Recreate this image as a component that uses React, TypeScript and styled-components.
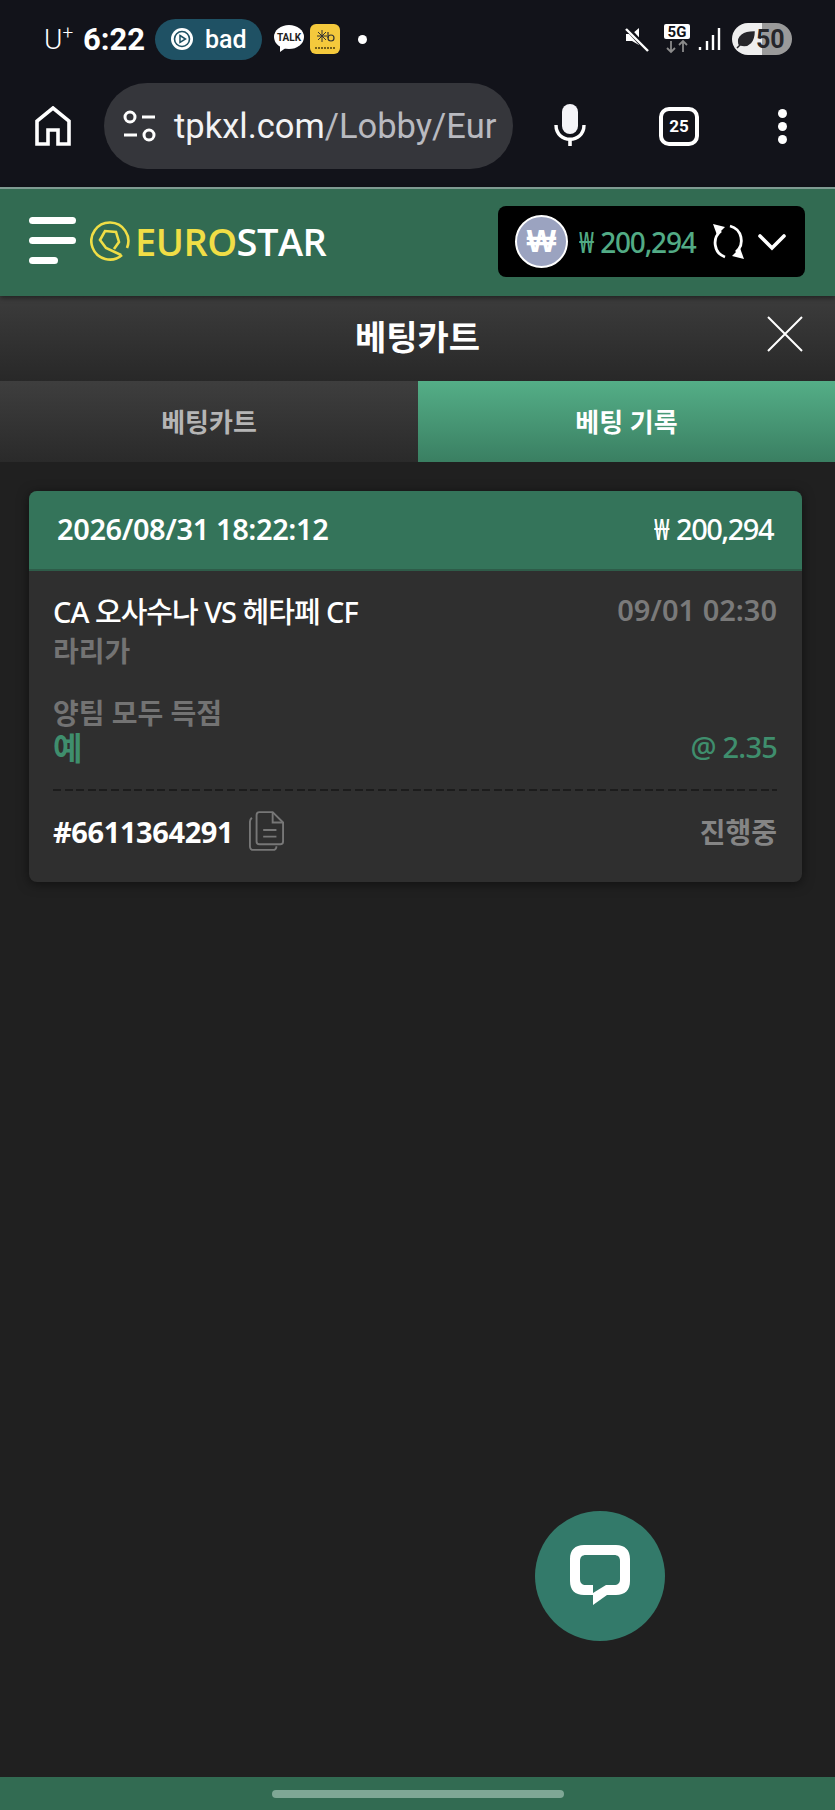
import React from 'react'
import styled, { createGlobalStyle } from 'styled-components'

const GlobalStyle = createGlobalStyle`
	html, body {
		margin: 0;
		padding: 0;
		background: #202020;
	}
	* {
		box-sizing: border-box;
	}
`

const KR = `"Noto Sans", "Noto Sans CJK KR", sans-serif`

const Page = styled.div`
	position: relative;
	width: 835px;
	height: 1810px;
	display: flex;
	flex-direction: column;
	background: #202020;
	font-family: ${KR};
	overflow: hidden;
`

/* phone chrome */
const Chrome = styled.div`
	height: 187px;
	background: #12131a;
	flex: none;
`

const StatusBar = styled.div`
	height: 78px;
	padding: 0 43px 0 44px;
	display: flex;
	align-items: center;
	justify-content: space-between;
	color: #fff;
	font-family: Roboto, sans-serif;
`

const StatusGroup = styled.div`
	display: flex;
	align-items: center;
`

const Carrier = styled.span`
	font-size: 28px;
	font-weight: 300;
	width: 39px;
	sup {
		font-size: 19px;
		line-height: 0;
		vertical-align: 10px;
	}
`

const Clock = styled.span`
	font-size: 31px;
	font-weight: 700;
	width: 72px;
`

const MediaPill = styled.div`
	width: 107px;
	height: 41px;
	border-radius: 21px;
	background: #1f5164;
	display: flex;
	align-items: center;
	padding-left: 15px;
	gap: 11px;
	font-size: 25px;
	font-weight: 500;
	margin-right: 12px;
`

const KbBadge = styled.div`
	width: 30px;
	height: 30px;
	border-radius: 6px;
	background: #f4c93c;
	margin-left: 6px;
	margin-right: 18px;
`

const Dot = styled.div`
	width: 9px;
	height: 9px;
	border-radius: 50%;
	background: #fff;
`

const Battery = styled.div`
	width: 60px;
	height: 32px;
	border-radius: 16px;
	background: linear-gradient(90deg, #eeeeee 0 50%, #9a9a9a 50% 100%);
	margin-left: 10px;
	display: flex;
	align-items: center;
	padding-left: 3px;
	color: #26262a;
	font-size: 25px;
	font-weight: 700;
	line-height: 1;
`

const Toolbar = styled.div`
	height: 109px;
	padding: 5px 0 18px 35px;
	display: flex;
	align-items: center;
`

const UrlPill = styled.div`
	width: 409px;
	height: 86px;
	margin-left: 33px;
	border-radius: 43px;
	background: #35363b;
	display: flex;
	align-items: center;
	padding-left: 19px;
	gap: 18px;
	font-family: Roboto, sans-serif;
	font-size: 34.5px;
	color: #b9bac0;
	overflow: hidden;
	white-space: nowrap;
	b {
		font-weight: 400;
		color: #f2f2f4;
	}
`

const MicSlot = styled.div`
	margin-left: 41px;
	display: flex;
`

const TabCount = styled.div`
	width: 40px;
	height: 39px;
	margin-left: 73px;
	border: 4px solid #fff;
	border-radius: 10px;
	display: flex;
	align-items: center;
	justify-content: center;
	color: #fff;
	font-family: Roboto, sans-serif;
	font-weight: 700;
	font-size: 17px;
`

const MenuDots = styled.div`
	margin-left: 79px;
	display: flex;
	flex-direction: column;
	gap: 4px;
	span {
		width: 9px;
		height: 9px;
		border-radius: 50%;
		background: #fff;
	}
`

/* site header */
const SiteHeader = styled.header`
	height: 109px;
	flex: none;
	background: #326b52;
	border-top: 2px solid #7f9a92;
	padding: 0 30px 0 29px;
	display: flex;
	align-items: center;
	justify-content: space-between;
	box-shadow: 0 2px 5px rgba(0, 0, 0, 0.45);
	position: relative;
	z-index: 2;
`

const Brand = styled.div`
	display: flex;
	align-items: center;
`

const Burger = styled.div`
	width: 47px;
	display: flex;
	flex-direction: column;
	gap: 13px;
	margin-right: 14px;
	margin-top: -5px;
`

const BurgerBar = styled.span<{ $short?: boolean }>`
	display: block;
	height: 7px;
	border-radius: 4px;
	background: #fff;
	width: ${p => (p.$short ? '29px' : '47px')};
`

const LogoText = styled.div`
	font-family: "Open Sans", sans-serif;
	font-size: 38px;
	font-weight: 600;
	letter-spacing: -0.5px;
	color: #fff;
	margin-left: 5px;
	margin-top: -4px;
	span {
		color: #f0de46;
	}
`

const Wallet = styled.div`
	width: 307px;
	height: 71px;
	margin-top: -2px;
	background: #000;
	border-radius: 8px;
	display: flex;
	align-items: center;
	padding-left: 17px;
`

const WonCoin = styled.div`
	width: 53px;
	height: 53px;
	border-radius: 50%;
	background: #9ba3c0;
	border: 2px solid #fff;
	display: flex;
	align-items: center;
	justify-content: center;
	color: #fff;
	font-weight: 900;
	font-size: 31px;
	font-family: "Liberation Sans", sans-serif;
`

const WalletAmount = styled.div`
	margin-left: 11px;
	color: #52ab85;
	font-size: 28px;
	font-weight: 500;
	letter-spacing: -1.2px;
	width: 127px;
	white-space: nowrap;
	margin-right: 5px;
`

const NarrowWon = styled.span`
	display: inline-block;
	transform: scaleX(0.78);
	transform-origin: left center;
	margin-right: -3px;
`

/* cart panel */
const TitleBar = styled.div`
	height: 85px;
	flex: none;
	background: linear-gradient(180deg, #3c3c3c, #282828);
	display: flex;
	align-items: center;
	justify-content: center;
	padding-bottom: 6px;
	position: relative;
	color: #fff;
	font-size: 34px;
	font-weight: 700;
`

const CloseButton = styled.div`
	position: absolute;
	right: 32px;
	top: 20px;
	display: flex;
`

const Tabs = styled.div`
	height: 81px;
	flex: none;
	display: grid;
	grid-template-columns: 418px 417px;
`

const Tab = styled.div<{ $active?: boolean }>`
	display: flex;
	align-items: center;
	justify-content: center;
	padding-bottom: 2px;
	font-size: 26px;
	font-weight: 700;
	color: ${p => (p.$active ? '#fff' : '#b5b5b5')};
	background: ${p =>
		p.$active
			? 'linear-gradient(180deg, #54ae87, #3a7f62)'
			: 'linear-gradient(180deg, #3e3e3e, #2a2a2a)'};
`

const Content = styled.main`
	flex: 1;
	padding: 29px 33px 0 29px;
`

const Card = styled.section`
	height: 391px;
	border-radius: 8px;
	background: #2f2f2f;
	box-shadow: 0 2px 12px rgba(0, 0, 0, 0.5);
	overflow: hidden;
`

const CardHead = styled.div`
	height: 80px;
	background: #34745a;
	border-bottom: 2px solid #2e5c49;
	padding: 0 29px 4px 28px;
	display: flex;
	align-items: center;
	justify-content: space-between;
	color: #fff;
	font-size: 29px;
	font-weight: 600;
	letter-spacing: -0.4px;
`

const HeadAmount = styled.span`
	font-weight: 500;
	letter-spacing: -1.5px;
`

const CardBody = styled.div`
	padding: 22px 25px 0 24px;
`

const Row = styled.div`
	display: flex;
	justify-content: space-between;
`

const Teams = styled.div`
	color: #fff;
	font-size: 29px;
	font-weight: 500;
	letter-spacing: -1px;
	line-height: 38px;
`

const MatchTime = styled.div`
	color: #7a7a7a;
	font-size: 29px;
	font-weight: 600;
	line-height: 34px;
`

const League = styled.div`
	color: #737373;
	font-size: 28px;
	font-weight: 700;
	line-height: 36px;
	margin-top: 2px;
`

const Market = styled(League)`
	margin-top: 26px;
`

const Pick = styled.div`
	color: #3f8e6d;
	font-size: 32px;
	font-weight: 700;
	line-height: 34px;
`

const Odds = styled.div`
	color: #3f8e6d;
	font-size: 29px;
	line-height: 32px;
	font-weight: 500;
	letter-spacing: -0.8px;
`

const Divider = styled.div`
	margin-top: 24px;
	height: 2px;
	background: repeating-linear-gradient(90deg, #1c1c1c 0 8px, transparent 8px 11.6px);
`

const CardFoot = styled.div`
	display: flex;
	align-items: center;
	justify-content: space-between;
	margin-top: 20px;
`

const TicketId = styled.div`
	display: flex;
	align-items: center;
	gap: 16px;
	color: #fff;
	font-size: 29px;
	font-weight: 700;
	letter-spacing: -0.4px;
`

const TicketState = styled.div`
	color: #858585;
	font-size: 28px;
	font-weight: 700;
`

const ChatButton = styled.div`
	position: absolute;
	left: 535px;
	top: 1511px;
	width: 130px;
	height: 130px;
	border-radius: 50%;
	background: #337a6a;
	display: flex;
	align-items: center;
	justify-content: center;
`

const BottomBar = styled.div`
	height: 33px;
	flex: none;
	background: #326b52;
	display: flex;
	justify-content: center;
	padding-top: 13px;
`

const HomePill = styled.div`
	width: 292px;
	height: 8px;
	border-radius: 4px;
	background: #7fa795;
`

const App: React.FC = () => (
	<>
		<GlobalStyle />
		<Page>
			<Chrome>
				<StatusBar>
					<StatusGroup>
						<Carrier>
							U<sup>+</sup>
						</Carrier>
						<Clock>6:22</Clock>
						<MediaPill>
							<svg width="24" height="24" viewBox="0 0 24 24">
								<circle cx="12" cy="12" r="11" fill="#fff" />
								<circle cx="12" cy="12" r="7.5" fill="none" stroke="#1f5164" strokeWidth="1.6" />
								<path d="M10 8.5 L15.5 12 L10 15.5 Z" fill="none" stroke="#1f5164" strokeWidth="1.5" />
							</svg>
							bad
						</MediaPill>
						<svg width="30" height="28" viewBox="0 0 30 28">
							<ellipse cx="15" cy="12" rx="15" ry="12" fill="#fff" />
							<path d="M6 20 L6 27 L13 22 Z" fill="#fff" />
							<text x="15" y="15.5" textAnchor="middle" fontSize="10" fontWeight="700" fontFamily="Roboto" fill="#222">
								TALK
							</text>
						</svg>
						<KbBadge>
							<svg width="30" height="30" viewBox="0 0 30 30">
								<path d="M7 12 H17 M12 6 V18 M8 8 L16 16 M16 8 L8 16" stroke="#333" strokeWidth="1" />
								<circle cx="21" cy="14" r="3" fill="none" stroke="#333" strokeWidth="1.2" />
								<path d="M18 8 V14" stroke="#333" strokeWidth="1.2" />
								<path d="M5 24 H25" stroke="#75601a" strokeWidth="2" strokeDasharray="2 1" />
							</svg>
						</KbBadge>
						<Dot />
					</StatusGroup>
					<StatusGroup>
						<svg width="26" height="28" viewBox="0 0 26 28" style={{ marginRight: -1 }}>
							<path d="M2 9 H8 L15 3 V20 L8 16 H2 Z" fill="#fff" />
							<path d="M3 3 L24 26" stroke="#12131a" strokeWidth="5" />
							<path d="M2 4 L24 26" stroke="#fff" strokeWidth="2.4" />
						</svg>
						<svg width="28" height="30" viewBox="0 0 28 30" style={{ marginLeft: 14 }}>
							<rect x="1" y="0" width="26" height="15" rx="2" fill="#fff" />
							<text x="14" y="13" textAnchor="middle" fontSize="15" fontWeight="700" fontFamily="Roboto" fill="#12131a">
								5G
							</text>
							<path d="M8 17 V28 M4 24 L8 28 L12 24" fill="none" stroke="#8b8b8b" strokeWidth="1.8" />
							<path d="M20 28 V17 M16 21 L20 17 L24 21" fill="none" stroke="#8b8b8b" strokeWidth="1.8" />
						</svg>
						<svg width="24" height="24" viewBox="0 0 24 24" style={{ marginLeft: 7 }}>
							<path d="M2 20 V23 M9 14 V23 M15 8 V23 M21 1 V23" stroke="#fff" strokeWidth="2.4" fill="none" />
						</svg>
						<Battery>
							<svg width="21" height="21" viewBox="0 0 21 21">
								<path d="M2 19 L9 12 M4 15 C2 7 9 3 19 3 C19 12 14 18 6 16 Z" fill="#26262a" stroke="#26262a" strokeWidth="1.5" />
							</svg>
							50
						</Battery>
					</StatusGroup>
				</StatusBar>
				<Toolbar>
					<svg width="36" height="40" viewBox="0 0 36 40">
						<path d="M2 38 V15 L18 2 L34 15 V38 H23 V24 H13 V38 Z" fill="none" stroke="#fff" strokeWidth="3.6" />
					</svg>
					<UrlPill>
						<svg width="33" height="32" viewBox="0 0 33 32">
							<circle cx="7" cy="7" r="5" fill="none" stroke="#fff" strokeWidth="3" />
							<path d="M19 7 H32 M1 25 H14" stroke="#fff" strokeWidth="3" />
							<circle cx="26" cy="25" r="5" fill="none" stroke="#fff" strokeWidth="3" />
						</svg>
						<span>
							<b>tpkxl.com</b>/Lobby/Eur
						</span>
					</UrlPill>
					<MicSlot>
						<svg width="32" height="44" viewBox="0 0 32 44">
							<rect x="8" y="0" width="16" height="30" rx="8" fill="#f4f4f8" />
							<path d="M2 21 C2 40 30 40 30 21" fill="none" stroke="#fff" strokeWidth="3.4" />
							<path d="M16 34 V42" stroke="#fff" strokeWidth="3.6" />
						</svg>
					</MicSlot>
					<TabCount>25</TabCount>
					<MenuDots>
						<span />
						<span />
						<span />
					</MenuDots>
				</Toolbar>
			</Chrome>

			<SiteHeader>
				<Brand>
					<Burger>
						<BurgerBar />
						<BurgerBar />
						<BurgerBar $short />
					</Burger>
					<svg width="40" height="40" viewBox="0 0 40 40" style={{ marginTop: -4 }}>
						<path d="M32 34 A18.5 18.5 0 1 1 37 27" fill="none" stroke="#f0de46" strokeWidth="2.6" />
						<path d="M31 34 L16 27 L10 19 L15 10 L26 11 L29 21 L24 28" fill="none" stroke="#f0de46" strokeWidth="2.6" />
					</svg>
					<LogoText>
						<span>EURO</span>STAR
					</LogoText>
				</Brand>
				<Wallet>
					<WonCoin>₩</WonCoin>
					<WalletAmount>
						<NarrowWon>₩</NarrowWon> 200,294
					</WalletAmount>
					<svg width="36" height="36" viewBox="0 0 36 36">
						<path d="M10 7 A15 15 0 0 0 14 33" fill="none" stroke="#fff" strokeWidth="2.8" />
						<path d="M2 0 L14 3 L6 11 Z" fill="#fff" />
						<path d="M19 2 A15 15 0 0 1 25 28" fill="none" stroke="#fff" strokeWidth="2.8" />
						<path d="M33 35 L21 32 L29 24 Z" fill="#fff" />
					</svg>
					<svg width="28" height="18" viewBox="0 0 28 18" style={{ marginLeft: 11 }}>
						<path d="M2 3 L14 15 L26 3" fill="none" stroke="#fff" strokeWidth="3.6" strokeLinecap="round" />
					</svg>
				</Wallet>
			</SiteHeader>

			<TitleBar>
				베팅카트
				<CloseButton>
					<svg width="36" height="36" viewBox="0 0 36 36">
						<path d="M1 1 L35 35 M35 1 L1 35" stroke="#fff" strokeWidth="2" />
					</svg>
				</CloseButton>
			</TitleBar>

			<Tabs>
				<Tab>베팅카트</Tab>
				<Tab $active>베팅 기록</Tab>
			</Tabs>

			<Content>
				<Card>
					<CardHead>
						<span>2026/08/31 18:22:12</span>
						<HeadAmount>
							<NarrowWon>₩</NarrowWon> 200,294
						</HeadAmount>
					</CardHead>
					<CardBody>
						<Row>
							<Teams>CA 오사수나 VS 헤타페 CF</Teams>
							<MatchTime>09/01 02:30</MatchTime>
						</Row>
						<League>라리가</League>
						<Market>양팀 모두 득점</Market>
						<Row>
							<Pick>예</Pick>
							<Odds>@ 2.35</Odds>
						</Row>
						<Divider />
						<CardFoot>
							<TicketId>
								#6611364291
								<svg width="35" height="40" viewBox="0 0 37 42">
									<path d="M8 4 C8 2 9 1 11 1 H25 L36 12 V32 C36 34 35 35 33 35 H11 C9 35 8 34 8 32 Z" fill="none" stroke="#777" strokeWidth="2" />
									<path d="M25 1 V12 H36" fill="none" stroke="#777" strokeWidth="2" />
									<path d="M3 7 C2 8 1 9 1 11 V37 C1 40 2 41 5 41 H25 C28 41 29 39 29 37" fill="none" stroke="#777" strokeWidth="2" />
									<path d="M15 20 H29 M15 27 H29" stroke="#777" strokeWidth="2" />
								</svg>
							</TicketId>
							<TicketState>진행중</TicketState>
						</CardFoot>
					</CardBody>
				</Card>
			</Content>

			<ChatButton>
				<svg width="60" height="62" viewBox="0 0 60 62">
					<path
						fillRule="evenodd"
						d="M14 0 H46 C55 0 60 5 60 14 V36 C60 45 55 50 46 50 H37 L23 60 V50 H14 C5 50 0 45 0 36 V14 C0 5 5 0 14 0 Z M16 10 C12 10 10 12 10 16 V34 C10 38 12 40 16 40 H23 V48 L36 40 H44 C48 40 50 38 50 34 V16 C50 12 48 10 44 10 Z"
						fill="#fff"
					/>
				</svg>
			</ChatButton>

			<BottomBar>
				<HomePill />
			</BottomBar>
		</Page>
	</>
)

export default App
